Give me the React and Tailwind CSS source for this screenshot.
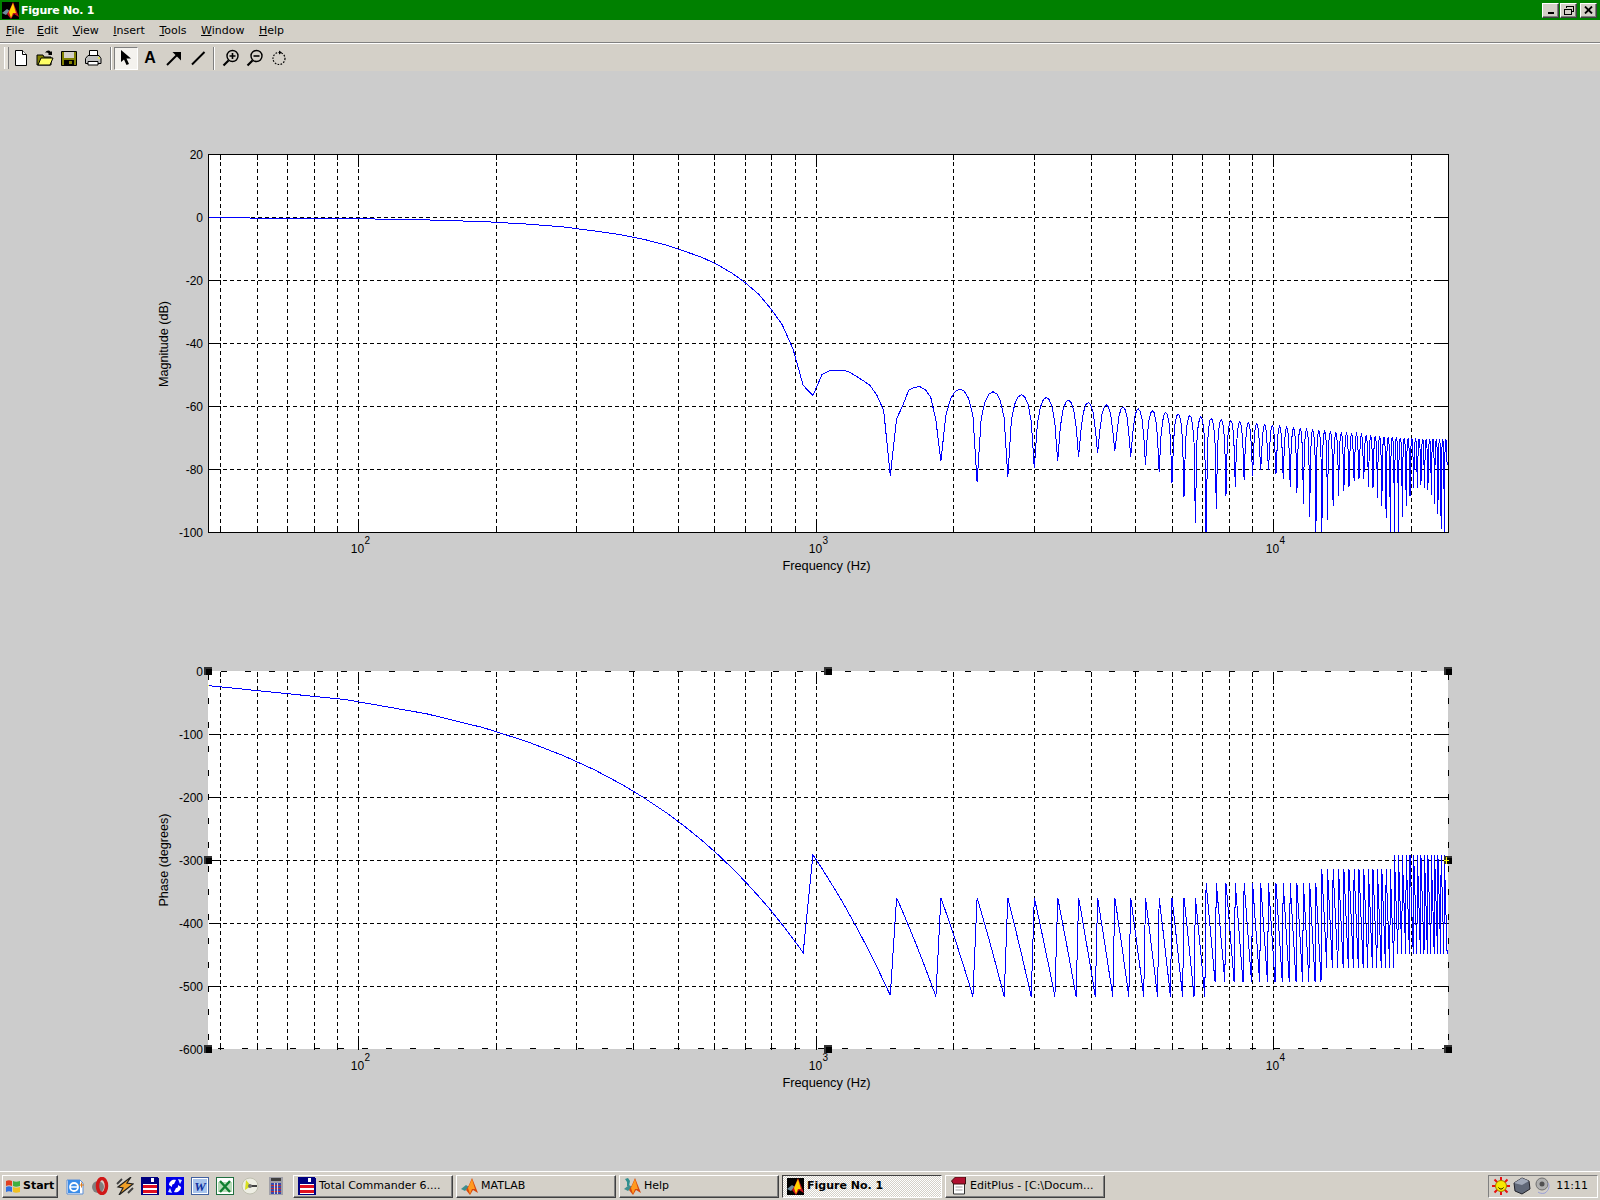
import React from "react";

const uiFont = "font-['DejaVu_Sans',sans-serif]";
const plotFont = "font-['Liberation_Sans',Arial,sans-serif]";
const raised = "border-t border-l border-t-white border-l-white border-r border-b border-r-[#404040] border-b-[#404040] shadow-[inset_-1px_-1px_0_#808080]";

// freqz grid: 512 bins up to nyquist
const BIN = 46.875;
const xOf = (f) => 358.5 + 457.5 * Math.log10(f / 100);
const gridX = (f) => Math.floor(xOf(f)) + 0.5;

const LOW_BINS = [
  -0.08, -0.33, -0.75, -1.3, -2.1, -3, -4.3, -5.5, -7, -8.7, -10.7, -12.6, -15, -17.7, -20.9, -24.4, -29, -34, -41.7,
  -53.3, -56.5, -49.8, -48.4, -48.4, -48.8, -50.2, -51.7, -53.3, -56.5, -61.3, -82, -63.9, -59.7, -54.9, -53.9, -53.7,
  -54.7, -57, -64.4,
];
// depth of each null, from m = 5
const NULLS = [
  -77.4, -84, -82.4, -79.5, -77.4, -75.9, -74.8, -74, -76, -78.4, -80.9, -84.3, -88.8, -97, -104, -92.4, -88.3, -85.4,
  -83.3, -82.2, -80.3, -80.2, -81.3, -82.9, -85.4, -87.6, -90.8, -95.2, -104, -104, -96, -91.7, -88.5, -86.9, -85.5,
  -83.5, -83, -83, -85.5, -86, -89, -91.7, -95.3, -104, -104, -104, -95, -91.5, -88.5, -86, -86, -85, -86, -86.5, -88,
  -91, -94, -99, -104,
];

const magnitude = (k) => {
  if (k < 40) return LOW_BINS[k - 1];
  const j = k % 8;
  const m = (k - j) / 8;
  if (j === 0) return NULLS[m - 5];
  const f = (m + 0.5) * 8 * BIN;
  const peak = -70.4 - 20 * Math.log10(Math.sin((Math.PI * f) / 48000)) - 1.5 * Math.pow(2060 / f, 3);
  return peak + 20 * Math.log10(Math.sin((Math.PI * j) / 8));
};

const phase = (k) => {
  if (k <= 20) return -22.32 * k;
  if (k < 32) return -22.32 * k + 178;
  const j = k % 8;
  const top = k < 152 ? -359 : k < 272 ? -336.5 : k < 392 ? -314 : -291;
  return top - 22.4 * j;
};

const bins = Array.from({ length: 511 }, (_, i) => i + 1);
const minors = [50, 60, 70, 80, 90, 200, 300, 400, 500, 600, 700, 800, 900, 2000, 3000, 4000, 5000, 6000, 7000, 8000, 9000, 20000];
const decades = [
  [100, "2"],
  [1000, "3"],
  [10000, "4"],
];

const LEFT = 208.5;
const RIGHT = 1448.5;
const TOP = 20.5;
const BOTTOM = 398.5;

const Plot = ({ id, ticks, curve, ylabel, labelY, selected }) => {
  const yMax = ticks[0];
  const yMin = ticks[ticks.length - 1];
  const yOf = (v) => TOP + ((yMax - v) / (yMax - yMin)) * 378;
  const points = bins.map((k) => `${xOf(k * BIN).toFixed(1)},${yOf(curve(k)).toFixed(1)}`).join(" ");
  const handles = [
    [LEFT, TOP],
    [828.5, TOP],
    [RIGHT, TOP],
    [LEFT, 209.5],
    [RIGHT, 209.5],
    [LEFT, BOTTOM],
    [828.5, BOTTOM],
    [RIGHT, BOTTOM],
  ];

  return (
    <svg width="1600" height="448" className="block shrink-0">
      <clipPath id={id}>
        <rect x="208" y="20" width="1241" height="379" />
      </clipPath>
      <rect x="208" y="20" width="1240" height="378" fill="#ffffff" />

      {/* grid */}
      <g stroke="#000000" strokeDasharray="4 3" shapeRendering="crispEdges">
        {[...minors, ...decades.map((d) => d[0])].map((f) => (
          <line key={f} x1={gridX(f)} x2={gridX(f)} y1={TOP} y2={BOTTOM} />
        ))}
        {ticks.slice(1, -1).map((v) => (
          <line key={v} x1={LEFT} x2={RIGHT} y1={yOf(v)} y2={yOf(v)} />
        ))}
      </g>

      {/* ticks */}
      <g stroke="#000000" shapeRendering="crispEdges">
        {minors.map((f) => (
          <g key={f}>
            <line x1={gridX(f)} x2={gridX(f)} y1={TOP} y2={TOP + 5} />
            <line x1={gridX(f)} x2={gridX(f)} y1={BOTTOM} y2={BOTTOM - 5} />
          </g>
        ))}
        {decades.map(([f]) => (
          <g key={f}>
            <line x1={gridX(f)} x2={gridX(f)} y1={TOP} y2={TOP + 12} />
            <line x1={gridX(f)} x2={gridX(f)} y1={BOTTOM} y2={BOTTOM - 12} />
          </g>
        ))}
        {ticks.slice(1, -1).map((v) => (
          <g key={v}>
            <line x1={LEFT} x2={LEFT + 12} y1={yOf(v)} y2={yOf(v)} />
            <line x1={RIGHT} x2={RIGHT - 12} y1={yOf(v)} y2={yOf(v)} />
          </g>
        ))}
      </g>

      <polyline
        points={points}
        fill="none"
        stroke="#0000ff"
        strokeWidth="1"
        shapeRendering="crispEdges"
        clipPath={`url(#${id})`}
      />

      {/* box, dashed while the axes is selected */}
      {selected ? (
        <g stroke="#000000" strokeDasharray="6 18" shapeRendering="crispEdges">
          <line x1={LEFT} x2={RIGHT} y1={TOP - 0.5} y2={TOP - 0.5} strokeDashoffset="-12" />
          <line x1={LEFT} x2={RIGHT} y1={BOTTOM - 1} y2={BOTTOM - 1} strokeDashoffset="-9" />
          <line x1={LEFT - 0.5} x2={LEFT - 0.5} y1={TOP} y2={BOTTOM} strokeDashoffset="-2" />
          <line x1={RIGHT - 0.5} x2={RIGHT - 0.5} y1={TOP} y2={BOTTOM} strokeDashoffset="-2" />
        </g>
      ) : (
        <rect x={LEFT} y={TOP} width={RIGHT - LEFT} height={BOTTOM - TOP} fill="none" stroke="#000000" shapeRendering="crispEdges" />
      )}
      {selected &&
        handles.map(([x, y]) => (
          <g key={`${x}-${y}`} shapeRendering="crispEdges">
            <rect x={x - 4.5} y={y - 4.5} width="8" height="8" fill="#333333" />
            <rect x={x - 2.5} y={y - 2.5} width="6" height="6" fill="#000000" />
          </g>
        ))}
      {selected && (
        <g shapeRendering="crispEdges">
          <rect x="208" y="34" width="1" height="1" fill="#ffff00" />
          <rect x="1446" y="206" width="1" height="7" fill="#ffff00" />
          <rect x="1444" y="209" width="5" height="1" fill="#ffff00" />
        </g>
      )}

      {/* labels */}
      <g className={`${plotFont} text-[12px]`} fill="#000000">
        {ticks.map((v) => (
          <text key={v} x="203" y={yOf(v) + 4.5} textAnchor="end">
            {v}
          </text>
        ))}
        {decades.map(([f, e]) => (
          <g key={f}>
            <text x={gridX(f) - 1} y={BOTTOM + 20} textAnchor="middle">
              10
            </text>
            <text x={gridX(f) + 6} y={BOTTOM + 11} className="text-[10px]">
              {e}
            </text>
          </g>
        ))}
        <text x="826.5" y={BOTTOM + 37} textAnchor="middle" className="text-[12.8px]">
          Frequency (Hz)
        </text>
        <text
          transform={`translate(168 ${labelY}) rotate(-90)`}
          textAnchor="middle"
          className="text-[12.6px]"
        >
          {ylabel}
        </text>
      </g>
    </svg>
  );
};

const MatlabIcon = ({ dark, help }) => (
  <svg viewBox="0 0 17 17" className="w-[17px] h-[17px] shrink-0">
    {dark && <rect width="17" height="17" fill="#000000" />}
    {help && <path d="M1 1 L4 0 L6 3 L5 8 L3 8 L3 4 Z" fill="#2f8f8f" />}
    <path d="M0 11 L5 7 L8 9 L4 13 Z" fill={dark ? "#6f8f9f" : "#3f8f8f"} />
    <path d="M11 0 L17 15 L12 12 L9 17 L5 12 L8 7 Z" fill={dark ? "#c8141c" : "#d8480c"} />
    <path d="M11 1 L14 11 L11 11 L9 16 L7 10 Z" fill={dark ? "#ffd400" : "#ff9a20"} />
  </svg>
);

const Floppy = ({ className }) => (
  <svg viewBox="0 0 18 18" className={className} shapeRendering="crispEdges">
    <path d="M0 0h16l2 2v16H0z" fill="#000080" />
    <path d="M10 1h3v4h-3z" fill="#ffffff" />
    <path d="M2 7h14v10H2z" fill="#ffffff" />
    <path d="M2 8h14v3H2zM2 13h14v3H2z" fill="#e01020" />
  </svg>
);

const ToolIcon = ({ children }) => (
  <svg viewBox="0 0 18 18" className="w-[18px] h-[18px]">
    {children}
  </svg>
);

const Magnifier = ({ children }) => (
  <ToolIcon>
    <circle cx="10.5" cy="7" r="5.5" fill="#d4d0c8" stroke="#000000" strokeWidth="1.4" />
    <path d="M6.5 11.5 L1.5 16.5" stroke="#000000" strokeWidth="2.2" />
    {children}
  </ToolIcon>
);

const Title = () => (
  <div className="h-5 bg-[#008000] flex items-center shrink-0 pl-0.5 pr-[3px]">
    <MatlabIcon dark />
    <span className={`${uiFont} ml-0.5 pt-[2px] text-[11px] font-bold tracking-[-0.25px] text-white`}>Figure No. 1</span>
    <div className="ml-auto flex items-center">
      <button className={`${raised} w-[17px] h-[15px] bg-[#d4d0c8] flex items-end justify-center pb-[3px]`}>
        <span className="block w-[6px] h-[2px] bg-black" />
      </button>
      <button className={`${raised} w-[17px] h-[15px] bg-[#d4d0c8] ml-px flex items-center justify-center`}>
        <svg viewBox="0 0 10 9" className="w-[10px] h-[9px]" shapeRendering="crispEdges">
          <path d="M2.5 2V.5h7v5H8M.5 3.5h7v5h-7z" fill="none" stroke="#000000" />
          <path d="M0 3h8v1H0zM2 0h8v1H2z" fill="#000000" />
        </svg>
      </button>
      <button className={`${raised} w-[17px] h-[15px] bg-[#d4d0c8] ml-[3px] flex items-center justify-center`}>
        <svg viewBox="0 0 9 8" className="w-[9px] h-[8px]">
          <path d="M1 .5 L8 7.5 M8 .5 L1 7.5" stroke="#000000" strokeWidth="1.8" />
        </svg>
      </button>
    </div>
  </div>
);

const MENUS = [
  ["F", "ile"],
  ["E", "dit"],
  ["V", "iew"],
  ["I", "nsert"],
  ["T", "ools"],
  ["W", "indow"],
  ["H", "elp"],
];

const Menu = () => (
  <div className={`${uiFont} h-6 shrink-0 bg-[#d4d0c8] flex items-center gap-[14.5px] pl-[6px] text-[11px] text-black border-b border-b-white shadow-[inset_0_-1px_0_#808080]`}>
    {MENUS.map(([a, b]) => (
      <span key={a} className={a === "F" ? "-mr-[2px]" : ""}>
        <span className="underline">{a}</span>
        {b}
      </span>
    ))}
  </div>
);

const Grip = () => <div className="w-[5px] h-[22px] border-l border-r border-l-white border-r-[#808080] bg-[#e4e0d8]" />;
const Sep = () => <div className="w-[2px] h-[23px] border-l border-l-[#808080] bg-white" />;

const Toolbar = () => (
  <div className="h-[27px] shrink-0 bg-[#d4d0c8] flex items-center pl-1 pt-px">
    <Grip />
    <div className="flex items-center gap-1.5 ml-[3px]">
      <ToolIcon>
        <path d="M3.5 1.5h7l4 4v11h-11z" fill="#ffffff" stroke="#000000" />
        <path d="M10.5 1.5v4h4" fill="#ffffff" stroke="#000000" />
      </ToolIcon>
      <ToolIcon>
        <path d="M1 6h6l1 2h7v8H1z" fill="#808000" stroke="#000000" />
        <path d="M2 16l3-7h12l-3 7z" fill="#ffff66" stroke="#000000" />
        <path d="M9 4c2-3 4-3 6-1l1-1v4h-4l1-1c-1-1-2-2-4-1z" fill="#000000" />
      </ToolIcon>
      <ToolIcon>
        <path d="M1.5 2.5h15v14h-15z" fill="#808000" stroke="#000000" />
        <path d="M4 3h10v6H4z" fill="#d4d0c8" />
        <path d="M4 11h10v5H4z" fill="#000000" />
        <path d="M9 12h3v3H9z" fill="#808000" />
      </ToolIcon>
      <ToolIcon>
        <path d="M5.5 1.5h8v6h-8z" fill="#ffffff" stroke="#000000" />
        <path d="M1.5 9.5 L4 6.5h11l2 3v5h-15.500z" fill="#c0c0c0" stroke="#000000" />
        <path d="M4 12.500h10v3.500h-10z" fill="#ffffff" stroke="#000000" />
        <path d="M14 8.500h2v1h-2z" fill="#ffff00" />
      </ToolIcon>
    </div>
    <div className="ml-[8px]">
      <Sep />
    </div>
    <div className="ml-[2px] w-[24px] h-[23px] bg-[#f4f2ee] border-t border-l border-t-[#808080] border-l-[#808080] border-r border-b border-r-white border-b-white flex items-center justify-center">
      <svg viewBox="0 0 12 16" className="w-3 h-4">
        <path d="M1 0 L1 12 L4 9.500 L6.500 15 L9 14 L6.500 8.500 L11 8.500 Z" fill="#000000" />
      </svg>
    </div>
    <span className="ml-[3px] w-[18px] text-center font-['Liberation_Sans',sans-serif] font-bold text-[16px] leading-none text-black">A</span>
    <div className="ml-[6px] flex gap-1.5">
      <ToolIcon>
        <path d="M2 16 L13.500 4.500" stroke="#000000" strokeWidth="2" />
        <path d="M7.500 3h8.500v8.500z" fill="#000000" />
      </ToolIcon>
      <ToolIcon>
        <path d="M3 15.500 L15.500 3" stroke="#000000" strokeWidth="2" />
      </ToolIcon>
    </div>
    <div className="ml-[6px]">
      <Sep />
    </div>
    <div className="ml-[7px] flex gap-1.5">
      <Magnifier>
        <path d="M7.500 7h6M10.500 4v6" stroke="#000000" strokeWidth="1.600" />
      </Magnifier>
      <Magnifier>
        <path d="M7.500 7h6" stroke="#000000" strokeWidth="1.600" />
      </Magnifier>
      <ToolIcon>
        <circle cx="9" cy="9.500" r="6" fill="none" stroke="#000000" strokeWidth="1.200" strokeDasharray="1.600 1.400" />
        <path d="M9 1.500 L12 3.500 L9 5.500z" fill="#000000" />
      </ToolIcon>
    </div>
  </div>
);

const QuickIcon = ({ children, className = "" }) => (
  <svg viewBox="0 0 18 18" className={`w-[18px] h-[18px] shrink-0 ${className}`}>
    {children}
  </svg>
);

const QuickLaunch = () => (
  <div className="flex items-center gap-[7px] ml-[8px]">
    <QuickIcon>
      <path d="M1 3h13l3 3v11H1z" fill="#ffffff" stroke="#5a8ed8" />
      <path d="M2 3h12v13H2z" fill="#3a8ce8" />
      <circle cx="8" cy="10" r="4" fill="none" stroke="#ffffff" strokeWidth="1.800" />
      <path d="M4 10h8" stroke="#ffffff" strokeWidth="1.500" />
      <path d="M13 8h5M15.500 5.500v5" stroke="#e08020" strokeWidth="1" />
    </QuickIcon>
    <QuickIcon>
      <ellipse cx="7" cy="10" rx="6" ry="6" fill="#808080" />
      <ellipse cx="11" cy="9" rx="4.500" ry="7.500" fill="none" stroke="#d01818" strokeWidth="3.500" />
    </QuickIcon>
    <QuickIcon>
      <path d="M15 0 L2 10 L7 11 L3 18 L17 7 L11 6 Z" fill="#f0a028" stroke="#202020" strokeWidth="1.200" />
      <path d="M1 7 L6 2 M12 16 L17 11" stroke="#404040" strokeWidth="1.800" />
    </QuickIcon>
    <Floppy className="w-[18px] h-[18px] shrink-0" />
    <QuickIcon>
      <rect width="18" height="18" fill="#0000e8" />
      <path d="M3 8c0-4 4-6 7-5L8 7c-2 0-2 1-2 3zM15 10c0 4-4 6-7 5l2-4c2 0 2-1 2-3z" fill="#ffffff" />
      <path d="M12 2l4 1-2 4zM6 16l-4-1 2-4z" fill="#d8e8ff" />
    </QuickIcon>
    <QuickIcon>
      <rect x="0.500" y="0.500" width="17" height="17" fill="#ffffff" stroke="#4060a0" />
      <rect x="2" y="2" width="14" height="14" fill="#a8c4ec" />
      <text x="9" y="14" textAnchor="middle" fill="#1030a0" className="font-['Liberation_Serif',serif] font-bold italic text-[13px]">
        W
      </text>
    </QuickIcon>
    <QuickIcon>
      <rect x="0.500" y="0.500" width="17" height="17" fill="#ffffff" stroke="#207040" />
      <path d="M2 5h14v10H2z" fill="#b8dcb8" />
      <path d="M4 4 L14 15 M14 4 L4 15" stroke="#108030" strokeWidth="2.400" />
    </QuickIcon>
    <QuickIcon>
      <circle cx="9" cy="9" r="8" fill="#eeeee4" stroke="#c0c0b0" />
      <path d="M5 3 L10 9 L4 13z" fill="#d8e020" />
      <path d="M9 8h7v2H9z" fill="#404040" />
      <circle cx="9" cy="9" r="2" fill="#707070" />
    </QuickIcon>
    <svg viewBox="0 0 14 18" className="w-[14px] h-[18px] shrink-0 ml-[3px]" shapeRendering="crispEdges">
      <rect width="14" height="18" fill="#a0a0a8" />
      <rect x="2" y="1" width="10" height="3" fill="#404040" />
      <path d="M2 6h10v11H2z" fill="#3848b0" />
      <path d="M2 8h10M2 11h10M2 14h10" stroke="#c03030" />
      <path d="M5.500 6v11M8.500 6v11" stroke="#d0d0d8" />
    </svg>
  </div>
);

const TaskButton = ({ icon, label, active }) => (
  <div
    className={`${uiFont} h-[23px] w-[160px] shrink-0 flex items-center gap-[3px] pl-1 overflow-hidden text-[11px] text-black ${
      active
        ? "pt-px font-bold border-t border-l border-t-[#404040] border-l-[#404040] border-r border-b border-r-white border-b-white bg-[repeating-conic-gradient(#ffffff_0_25%,#d4d0c8_0_50%)] bg-[length:2px_2px]"
        : `bg-[#d4d0c8] ${raised}`
    }`}
  >
    {icon}
    <span className="whitespace-nowrap">{label}</span>
  </div>
);

const Taskbar = () => (
  <div className="h-[29px] shrink-0 bg-[#d4d0c8] border-t border-t-white flex items-center pl-0.5 pr-0.5">
    <div className={`${raised} ${uiFont} w-[56px] h-[23px] flex items-center gap-0.5 pl-0.5 font-bold text-[11px] text-black`}>
      <svg viewBox="0 0 16 16" className="w-4 h-4 shrink-0">
        <path d="M1 3c2-1 4-1 6 0v5c-2-1-4-1-6 0z" fill="#e04020" />
        <path d="M8 3c2 1 4 1 7 0v5c-3 1-5 1-7 0z" fill="#40b040" />
        <path d="M1 9c2-1 4-1 6 0v5c-2-1-4-1-6 0z" fill="#3070e0" />
        <path d="M8 9c2 1 4 1 7 0v5c-3 1-5 1-7 0z" fill="#f0c020" />
      </svg>
      Start
    </div>
    <QuickLaunch />
    <div className="ml-[10px] flex gap-[3px]">
      <TaskButton icon={<Floppy className="w-[18px] h-[18px] shrink-0" />} label="Total Commander 6...." />
      <TaskButton icon={<MatlabIcon />} label="MATLAB" />
      <TaskButton icon={<MatlabIcon help />} label="Help" />
      <TaskButton icon={<MatlabIcon dark />} label="Figure No. 1" active />
      <TaskButton
        icon={
          <svg viewBox="0 0 16 18" className="w-[17px] h-[18px] shrink-0">
            <path d="M3 3h11v14H3z" fill="#ffffff" stroke="#303030" />
            <path d="M1 4 L5 0h10v7H3z" fill="#b01030" stroke="#401010" />
            <path d="M5 10h7M5 13h7" stroke="#a0a0a0" />
          </svg>
        }
        label="EditPlus - [C:\Docum..."
      />
    </div>
    <div className={`${uiFont} ml-auto w-[110px] h-[23px] flex items-center pl-[3px] gap-[3px] border-t border-l border-t-[#808080] border-l-[#808080] border-r border-b border-r-white border-b-white text-[11px] text-black`}>
      <svg viewBox="0 0 18 18" className="w-[18px] h-[18px] shrink-0">
        <path d="M9 0v18M0 9h18M2.500 2.500l13 13M15.500 2.500l-13 13" stroke="#e81010" strokeWidth="2" />
        <circle cx="9" cy="9" r="5.500" fill="#f8e800" stroke="#a08000" />
        <path d="M6.500 10.500c1.500 2 3.500 2 5 0" fill="none" stroke="#000000" />
      </svg>
      <svg viewBox="0 0 18 18" className="w-[18px] h-[18px] shrink-0">
        <path d="M9 1 L16 4 L17 12 L9 17 L2 14 L1 6 Z" fill="#606878" stroke="#202028" />
        <path d="M9 1 L16 4 L9 8 L1 6 Z" fill="#a0a8b8" />
      </svg>
      <svg viewBox="0 0 18 18" className="w-[18px] h-[18px] shrink-0">
        <circle cx="8" cy="7" r="6" fill="#b0b0b0" stroke="#707070" />
        <circle cx="8" cy="7" r="2.500" fill="#505050" />
        <path d="M14 6c2 3 1 7-3 10M11 16c-3 1-6 0-7-1" fill="none" stroke="#9aa0d8" />
      </svg>
      <span className="ml-auto mr-[9px]">11:11</span>
    </div>
  </div>
);

const App = () => {
  return (
    <div className="w-[1600px] h-[1200px] flex flex-col overflow-hidden bg-[#cccccc]">
      <Title />
      <Menu />
      <Toolbar />

      {/* Figure area */}
      <div className="flex-1 flex flex-col pt-[63px] gap-[69px] overflow-hidden">
        <Plot id="mag" ticks={[20, 0, -20, -40, -60, -80, -100]} curve={magnitude} ylabel="Magnitude (dB)" labelY={210} />
        <Plot
          id="pha"
          ticks={[0, -100, -200, -300, -400, -500, -600]}
          curve={phase}
          ylabel="Phase (degrees)"
          labelY={209}
          selected
        />
      </div>

      <Taskbar />
    </div>
  );
};

export default App;
